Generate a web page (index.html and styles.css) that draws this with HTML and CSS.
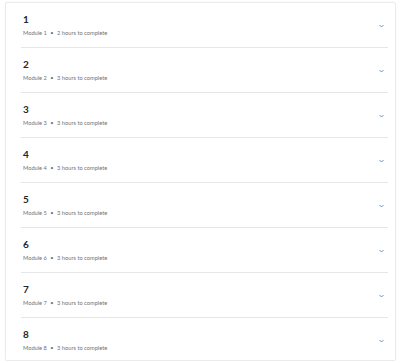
FILE: index.html
```html
<!DOCTYPE html>
<html lang="en">
<head>
    <meta charset="UTF-8">
    <title>Modules</title>
    <link rel="stylesheet" href="styles.css">
</head>
<body>
    <div class="card">
        <div class="module"><div class="info"><h3>1</h3><p>Module 1 <span class="dot">&bull;</span> 2 hours to complete</p></div><span class="chev"><svg viewBox="0 0 10 6" width="5" height="4"><path d="M1 1l4 4 4-4" fill="none" stroke="#5b86b8" stroke-width="1.8"/></svg></span></div>
        <div class="module"><div class="info"><h3>2</h3><p>Module 2 <span class="dot">&bull;</span> 3 hours to complete</p></div><span class="chev"><svg viewBox="0 0 10 6" width="5" height="4"><path d="M1 1l4 4 4-4" fill="none" stroke="#5b86b8" stroke-width="1.8"/></svg></span></div>
        <div class="module"><div class="info"><h3>3</h3><p>Module 3 <span class="dot">&bull;</span> 3 hours to complete</p></div><span class="chev"><svg viewBox="0 0 10 6" width="5" height="4"><path d="M1 1l4 4 4-4" fill="none" stroke="#5b86b8" stroke-width="1.8"/></svg></span></div>
        <div class="module"><div class="info"><h3>4</h3><p>Module 4 <span class="dot">&bull;</span> 3 hours to complete</p></div><span class="chev"><svg viewBox="0 0 10 6" width="5" height="4"><path d="M1 1l4 4 4-4" fill="none" stroke="#5b86b8" stroke-width="1.8"/></svg></span></div>
        <div class="module"><div class="info"><h3>5</h3><p>Module 5 <span class="dot">&bull;</span> 3 hours to complete</p></div><span class="chev"><svg viewBox="0 0 10 6" width="5" height="4"><path d="M1 1l4 4 4-4" fill="none" stroke="#5b86b8" stroke-width="1.8"/></svg></span></div>
        <div class="module"><div class="info"><h3>6</h3><p>Module 6 <span class="dot">&bull;</span> 3 hours to complete</p></div><span class="chev"><svg viewBox="0 0 10 6" width="5" height="4"><path d="M1 1l4 4 4-4" fill="none" stroke="#5b86b8" stroke-width="1.8"/></svg></span></div>
        <div class="module"><div class="info"><h3>7</h3><p>Module 7 <span class="dot">&bull;</span> 3 hours to complete</p></div><span class="chev"><svg viewBox="0 0 10 6" width="5" height="4"><path d="M1 1l4 4 4-4" fill="none" stroke="#5b86b8" stroke-width="1.8"/></svg></span></div>
        <div class="module"><div class="info"><h3>8</h3><p>Module 8 <span class="dot">&bull;</span> 3 hours to complete</p></div><span class="chev"><svg viewBox="0 0 10 6" width="5" height="4"><path d="M1 1l4 4 4-4" fill="none" stroke="#5b86b8" stroke-width="1.8"/></svg></span></div>
    </div>
</body>
</html>
```

FILE: styles.css
```css
body {
    font-family: Lato, "Noto Sans", sans-serif;
    background-color: #fff;
    margin: 0;
    padding: 0;
}
.card {
    margin: 2px 4px 0 5px;
    border: 1px solid #ebebeb;
    border-radius: 2px;
    box-shadow: 0 0 2px rgba(0, 0, 0, 0.04);
    height: 359px;
    box-sizing: border-box;
}
.module {
    display: flex;
    align-items: flex-start;
    justify-content: space-between;
    margin: 0 7px 0 15px;
    height: 45px;
    box-sizing: border-box;
    padding-top: 10px;
    border-bottom: 1px solid #e6e6e6;
}
.module:last-child {
    border-bottom: none;
}
.info h3 {
    margin: 0;
    font-size: 10px;
    line-height: 13px;
    font-weight: 700;
    color: #262626;
    padding-left: 2px;
}
.info p {
    margin: 3px 0 0 2px;
    font-size: 5.7px;
    line-height: 8px;
    color: #737373;
}
.dot {
    margin: 0 2px;
}
.chev {
    margin-top: 11px;
    margin-right: 4px;
    display: flex;
}
```
